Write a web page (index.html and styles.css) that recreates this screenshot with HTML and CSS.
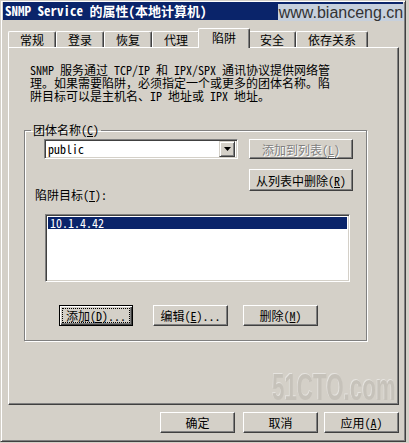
FILE: index.html
```html
<!DOCTYPE html>
<html>
<head>
  <meta charset="utf-8">
  <title>SNMP Service 的属性</title>
  <link rel="stylesheet" href="styles.css">
</head>
<body>
  <div class="window">
    <div class="titlebar">
      <span class="title">SNMP Service 的属性(本地计算机)</span>
      <span class="site-mark">www.bianceng.cn</span>
    </div>

    <div class="tabs">
      <div class="tab">常规</div>
      <div class="tab">登录</div>
      <div class="tab">恢复</div>
      <div class="tab">代理</div>
      <div class="tab active">陷阱</div>
      <div class="tab">安全</div>
      <div class="tab">依存关系</div>
    </div>

    <div class="panel">
      <p class="intro">SNMP 服务通过 TCP/IP 和 IPX/SPX 通讯协议提供网络管<br>理。如果需要陷阱，必须指定一个或更多的团体名称。陷<br>阱目标可以是主机名、IP 地址或 IPX 地址。</p>

      <fieldset class="group">
        <legend>团体名称(<u>C</u>)</legend>
        <div class="community-row">
          <div class="combo">
            <span class="combo-text">public</span>
            <span class="combo-btn">
              <svg width="7" height="4" viewBox="0 0 7 4"><path d="M0 0h7L3.5 4z" fill="#000"/></svg>
            </span>
          </div>
          <button class="btn btn-wide" disabled>添加到列表(<u>L</u>)</button>
        </div>
        <div class="remove-row">
          <button class="btn btn-wide btn-tall">从列表中删除(<u>R</u>)</button>
        </div>
        <div class="field-label">陷阱目标(<u>T</u>):</div>
        <div class="listbox">
          <div class="list-item selected">10.1.4.42</div>
        </div>
        <div class="actions">
          <button class="btn btn-default"><span class="focus">添加(<u>D</u>)...</span></button>
          <button class="btn btn-edit">编辑(<u>E</u>)...</button>
          <button class="btn">删除(<u>M</u>)</button>
        </div>
      </fieldset>
    </div>

    <div class="footer">
      <button class="btn btn-ok">确定</button>
      <button class="btn">取消</button>
      <button class="btn">应用(<u>A</u>)</button>
    </div>

    <div class="blog-mark">51CTO.com</div>
  </div>
</body>
</html>
```

FILE: styles.css
```css
/* Win2000 classic dialog */
body {
  margin: 0;
  background-color: #d4d0c8;
  font-family: "Noto Sans Mono CJK SC", "Noto Sans CJK SC", monospace;
  font-size: 12px;
  color: #000;
}

.window {
  position: relative;
  box-sizing: border-box;
  width: 406px;
  height: 442px;
  padding: 1px 2px 2px 2px;
  border: 1px solid;
  border-color: #d4d0c8 #404040 #404040 #d4d0c8;
  box-shadow: inset 1px 1px #fff, inset -1px -1px #808080;
  background-color: #d4d0c8;
}

.titlebar {
  height: 18px;
  display: flex;
  align-items: center;
  padding-left: 2px;
  background-color: #0a246a;
  color: #fff;
}

.title {
  font-size: 13px;
  font-weight: bold;
  line-height: 18px;
}

.site-mark {
  position: absolute;
  left: 277px;
  top: 3px;
  width: 126px;
  height: 17px;
  background-color: #c7d0dc;
  color: #333;
  font-family: "Liberation Sans", Arial, sans-serif;
  font-size: 16px;
  line-height: 17px;
  text-align: center;
}

/* tabs */
.tabs {
  display: flex;
  align-items: flex-end;
  height: 19px;
  margin: 8px 0 0 5px;
}

.tab {
  box-sizing: border-box;
  height: 16px;
  padding: 2px 11px 0 11px;
  line-height: 12px;
  border: 1px solid;
  border-bottom: none;
  border-color: #fff #404040 #fff #fff;
  border-radius: 2px 2px 0 0;
  box-shadow: inset -1px 0 #808080;
}

.tab.active {
  position: relative;
  z-index: 1;
  height: 20px;
  margin: 0 -2px -1px -2px;
  padding: 3px 13px 0 13px;
  background-color: #d4d0c8;
}

/* page */
.panel {
  box-sizing: border-box;
  width: 391px;
  height: 358px;
  margin-left: 5px;
  padding: 15px 0 0 15px;
  border: 1px solid;
  border-color: #fff #404040 #404040 #fff;
  box-shadow: inset -1px -1px #808080;
}

.intro {
  margin: 0 0 0 6px;
  line-height: 13px;
}

.group {
  box-sizing: border-box;
  width: 343px;
  margin: 22px 0 0 0;
  padding: 0 0 14px 10px;
  border: 1px solid #808080;
  box-shadow: 1px 1px #fff, inset 1px 1px #fff;
}

.group legend {
  margin-left: -4px;
  padding: 0 2px;
  line-height: 12px;
}

.community-row {
  display: flex;
  gap: 11px;
  margin: 3px 0 0 9px;
}

.combo {
  box-sizing: border-box;
  display: flex;
  align-items: center;
  width: 194px;
  height: 20px;
  border: 1px solid;
  border-color: #808080 #fff #fff #808080;
  box-shadow: inset 1px 1px #404040, inset -1px -1px #d4d0c8;
  background-color: #fff;
  padding: 2px;
}

.combo-text {
  flex: 1;
  padding-left: 1px;
  line-height: 14px;
}

.combo-btn {
  box-sizing: border-box;
  width: 16px;
  height: 16px;
  display: flex;
  align-items: center;
  justify-content: center;
  background-color: #d4d0c8;
  border: 1px solid;
  border-color: #d4d0c8 #404040 #404040 #d4d0c8;
  box-shadow: inset 1px 1px #fff, inset -1px -1px #808080;
}

.btn {
  box-sizing: border-box;
  width: 75px;
  height: 21px;
  padding: 0;
  font-family: inherit;
  font-size: 12px;
  color: #000;
  background-color: #d4d0c8;
  border: 1px solid;
  border-color: #fff #404040 #404040 #fff;
  box-shadow: inset -1px -1px #808080;
  border-radius: 0;
}

.btn-wide {
  width: 104px;
  height: 20px;
}

.btn-tall {
  height: 22px;
}

.btn:disabled {
  color: #808080;
  text-shadow: 1px 1px #fff;
}

.remove-row {
  margin: 10px 0 0 214px;
}

.field-label {
  margin-top: -2px;
  line-height: 12px;
}

.listbox {
  box-sizing: border-box;
  width: 305px;
  height: 68px;
  margin: 13px 0 0 10px;
  padding: 2px;
  border: 1px solid;
  border-color: #808080 #fff #fff #808080;
  box-shadow: inset 1px 1px #404040, inset -1px -1px #d4d0c8;
  background-color: #fff;
}

.list-item {
  height: 12px;
  line-height: 12px;
  padding-left: 2px;
}

.list-item.selected {
  background-color: #0a246a;
  color: #fff;
}

.actions {
  display: flex;
  margin: 23px 0 0 24px;
}

.btn-default {
  width: 74px;
  border-color: #000;
  box-shadow: inset 1px 1px #fff, inset -1px -1px #404040, inset -2px -2px #808080;
}

.btn-default .focus {
  display: inline-block;
  padding: 1px 3px;
  outline: 1px dotted #000;
  line-height: 11px;
}

.btn-edit {
  margin: 0 15px 0 20px;
}

.footer {
  display: flex;
  justify-content: flex-end;
  gap: 6px;
  margin: 7px 4px 0 0;
}

.btn-ok {
  margin-right: 2px;
}

/* blog watermark */
.blog-mark {
  position: absolute;
  left: 271px;
  top: 369px;
  white-space: nowrap;
  font-family: "Liberation Sans", Arial, sans-serif;
  font-size: 36px;
  font-weight: bold;
  line-height: 36px;
  color: #c6c2ba;
  text-shadow: -1px -1px #e6e4e0;
  transform: scale(0.62, 1);
  transform-origin: left top;
  pointer-events: none;
}
```
